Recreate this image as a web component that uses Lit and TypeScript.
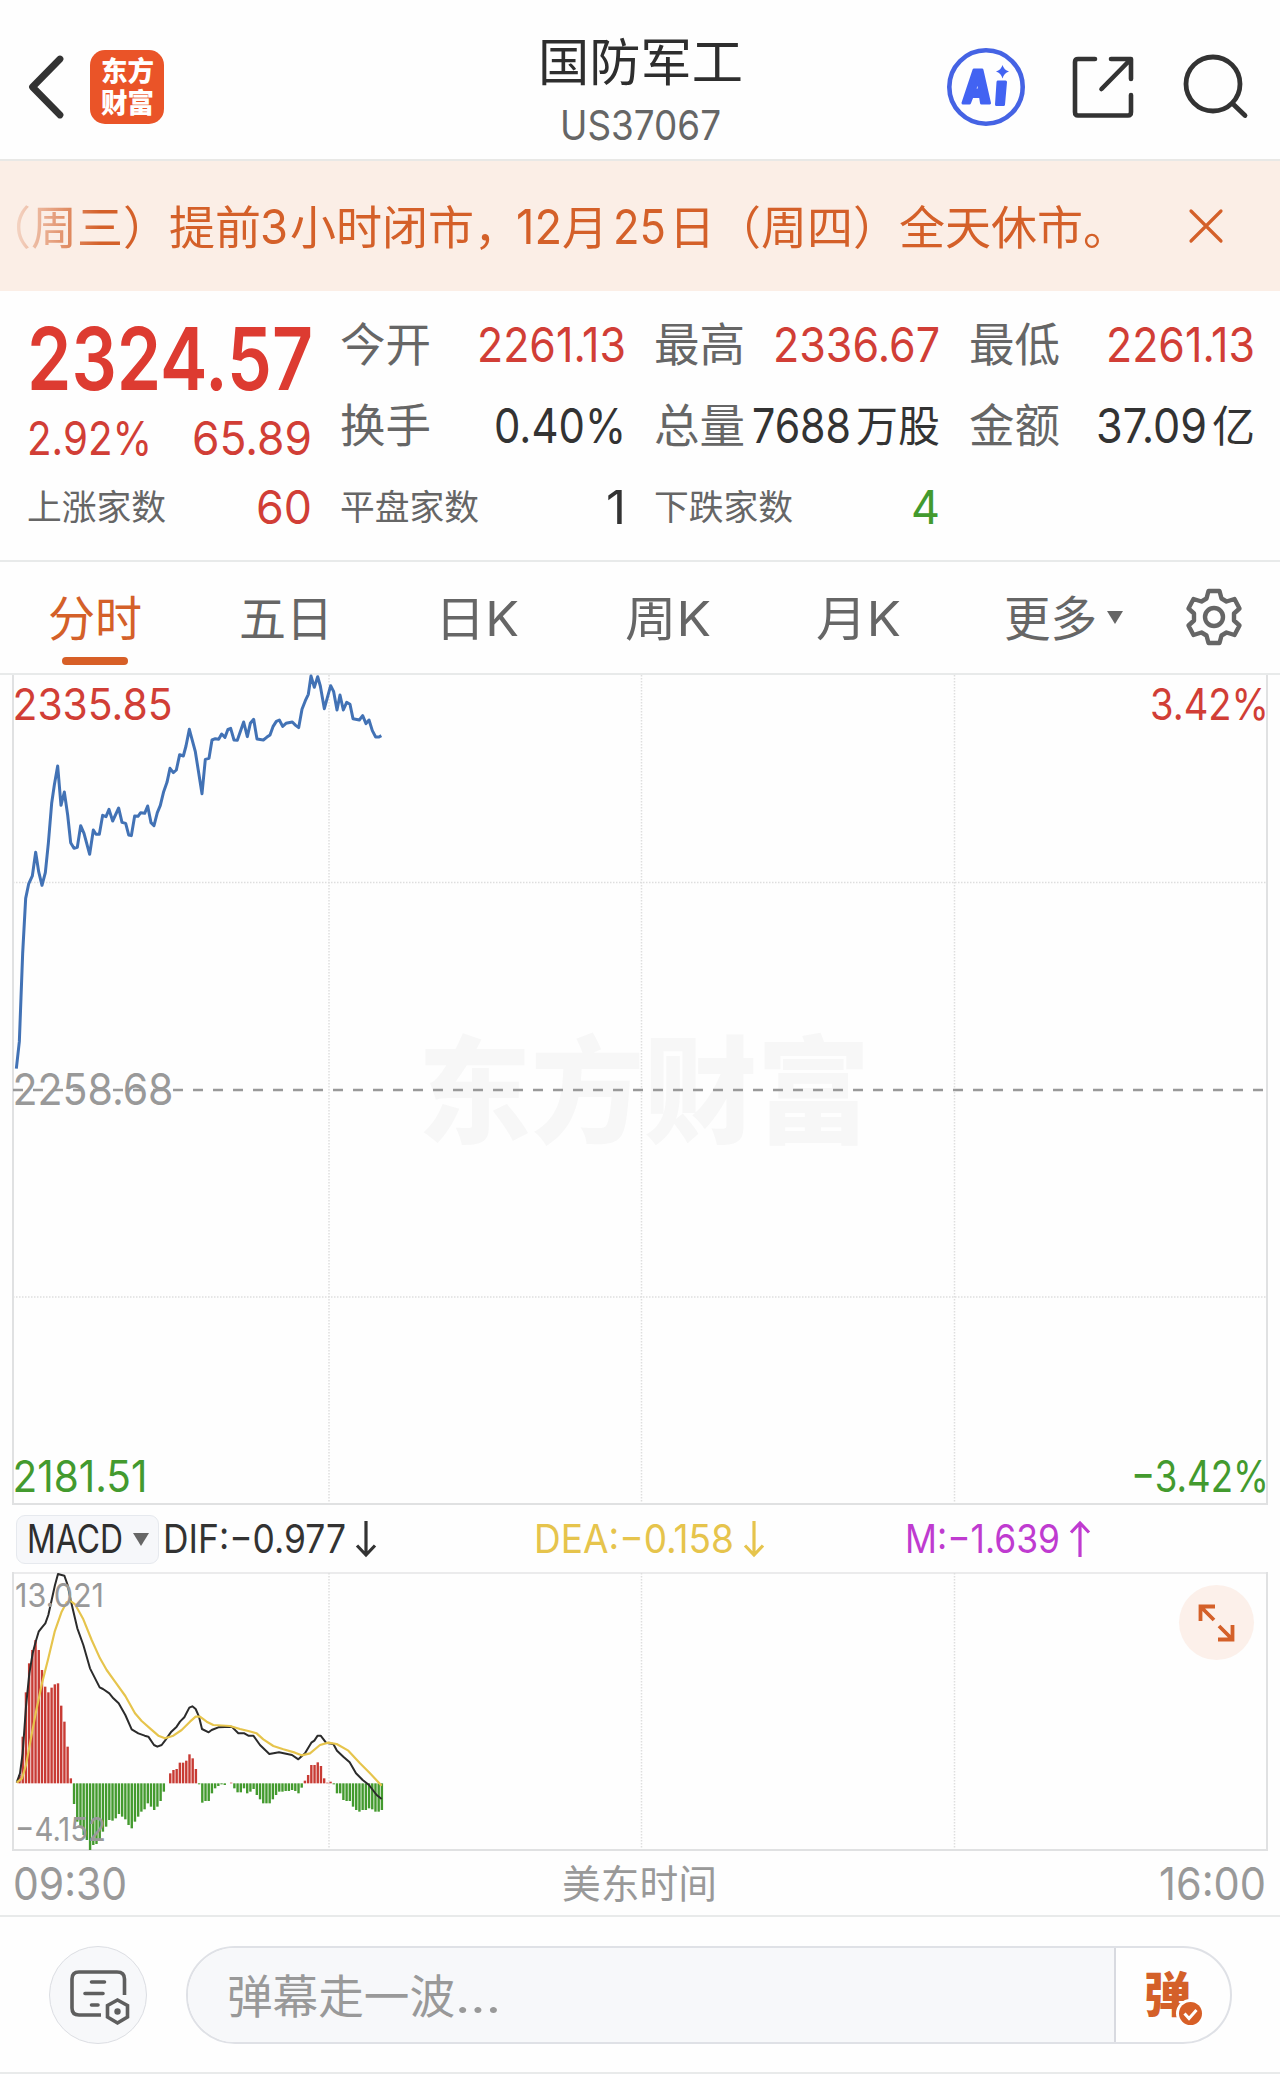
import { LitElement, html, css, svg } from "lit";
import { customElement } from "lit/decorators.js";

/** One line of text set to an exact advance width, in an em-high box. */
const fit = (text: string, width: number, size: number, cls = "") => html`
  <svg class="fit ${cls}" width=${width} height=${size} role="text">
    <text x="0" y=${size * 0.85} font-size=${size} textLength=${width} lengthAdjust="spacingAndGlyphs">${text}</text>
  </svg>`;

const label = (text: string, x: number, y: number, width: number, size: number, cls: string) => svg`
  <text class=${cls} x=${x} y=${y} font-size=${size} textLength=${width} lengthAdjust="spacingAndGlyphs">${text}</text>`;

/** Runs of the notice: text, start offset, advance width, font size. */
const NOTICE: [string, number, number, number][] = [
  ["（周三）提前", 0, 276, 46],
  ["3", 275, 28, 48],
  ["小时闭市，", 305, 230, 46],
  ["12", 531, 46, 48],
  ["月", 577, 46, 46],
  ["25", 628, 53, 48],
  ["日（周四）全天休市。", 684, 460, 46],
];

const PRICE =
  "49,1226 58,1145 68,880 77,715 86,672 97,648 107,577 116,635 126,676 136,638 145,550 155,430 163,375 173,318 183,436 193,396 203,465 212,548 222,565 232,562 242,497 252,520 269,583 280,510 288,523 298,523 308,466 318,470 327,448 338,483 356,444 366,487 377,490 386,525 394,527 404,468 414,469 422,458 434,460 443,438 453,488 462,497 472,458 481,436 491,395 501,367 510,325 520,338 529,330 539,284 550,288 558,258 568,208 586,275 606,401 616,298 627,295 636,240 646,236 656,238 665,222 675,232 684,208 692,205 702,240 712,241 731,186 742,230 751,190 761,178 771,237 790,240 800,232 810,225 819,200 829,184 838,180 848,199 858,190 877,186 887,196 896,203 906,148 916,122 925,103 933,48 943,82 953,50 961,78 973,146 992,77 1001,95 1011,150 1020,105 1030,150 1040,127 1050,133 1059,176 1078,180 1088,167 1098,191 1107,180 1117,212 1127,231 1137,231 1144,227";

const DIF =
  "50,1028 60,1000 68,940 78,800 88,700 98,640 107,605 116,575 126,562 136,550 145,525 155,480 165,435 174,402 193,407 203,435 212,480 232,565 250,615 270,685 299,742 309,747 328,760 340,775 356,790 376,825 395,868 415,880 434,887 445,890 462,915 472,920 485,915 495,902 514,875 530,860 540,845 553,832 568,803 577,799 587,807 597,830 606,867 626,877 635,870 655,862 695,860 715,880 733,880 745,887 760,887 780,915 808,942 837,937 876,945 895,958 915,940 934,908 943,902 953,887 962,887 978,908 1000,912 1011,932 1030,950 1049,967 1068,1000 1088,1020 1107,1035 1130,1065 1145,1077";

const DEA =
  "50,1028 66,1015 78,975 90,910 107,820 126,730 145,655 164,575 185,515 200,487 212,483 225,493 250,538 275,600 300,655 320,690 345,725 376,768 405,820 425,843 450,865 475,887 495,895 520,887 545,870 570,845 587,830 600,830 620,845 640,855 690,858 720,867 745,873 770,880 790,898 820,918 850,928 885,938 905,946 930,940 960,915 985,908 1010,912 1045,932 1080,970 1110,1000 1145,1037";

/** Histogram heights per minute, positive above the zero line. */
const BARS = [
  25, 140, 273, 360, 400, 430, 400, 340, 290, 273, 287, 297, 300, 233, 185, 110, 15,
  -62, -115, -130, -155, -170, -200, -185, -182, -170, -145, -130, -110, -112, -105, -92, -100, -108, -125, -135, -115,
  -100, -85, -78, -60, -70, -80, -70, -53, -25, 0,
  30, 40, 43, 62, 62, 68, 87, 75, 43, -3,
  -58, -53, -53, -30, -15, -8, -3, -5, 0, 2, -15, -27, -27, -15, -30, -25, -17, -35, -48, -60, -60, -60, -48, -35, -25,
  -25, -23, -23, -20, -23, -30, -13, 8, 25, 55, 55, 63, 52, 15, 2, 5, -3, -30, -30, -50, -53, -53, -70, -80, -85, -80,
  -80, -75, -78, -85, -85, -80,
];

@customElement("app-root")
export class AppRoot extends LitElement {
  static styles = css`
    :host {
      display: block;
      width: 1280px;
      height: 2080px;
      overflow: hidden;
      background: #fefefe;
      color: #333;
      font-family: Inter, "Noto Sans CJK SC", sans-serif;
    }
    * { box-sizing: border-box; }
    svg { display: block; flex: none; overflow: visible; }
    text { fill: currentColor; }
    .red { color: #d13e36; }
    .vivid { color: #dd3b31; }
    .green { color: #439a2e; }
    .orange { color: #d46029; }
    .gray { color: #666; }
    .light { color: #999; }
    .dark { color: #2e2e2e; }
    .gold { color: #e6c44c; }
    .purple { color: #bf3bd0; }
    .white { color: #fff; }
    .mark { color: #f7f7f7; }
    .semi { font-weight: 600; }
    .heavy { font-weight: 900; }

    .header { display: grid; grid-template-columns: 400px 1fr 400px; height: 161px; border-bottom: 2px solid #e8e8e6; }
    .left { display: flex; align-items: center; gap: 25px; padding: 15px 0 0 27px; }
    .logo { width: 74px; height: 74px; border-radius: 15px; background: #ea5428; display: flex; flex-direction: column; align-items: center; justify-content: center; gap: 5px; }
    .title { display: flex; flex-direction: column; align-items: center; padding-top: 38px; gap: 16px; }
    .actions { display: flex; align-items: center; justify-content: flex-end; gap: 47px; padding: 15px 31px 0 0; }
    .search { margin-left: 4px; }

    .notice { height: 130px; background: #fbeee6; display: flex; align-items: center; }
    .marquee { width: 1112px; height: 60px; margin-left: 8px; overflow: hidden; display: flex; align-items: center; padding-top: 3px; -webkit-mask-image: linear-gradient(to right, rgba(0,0,0,0.1) 0, #000 92px); mask-image: linear-gradient(to right, rgba(0,0,0,0.1) 0, #000 92px); }
    .marquee svg { margin-left: -23px; }
    .notice .close { margin-left: 69px; }

    .quote { height: 271px; padding: 13px 26px 0 27px; border-bottom: 2px solid #e8eaea; display: grid; grid-template-columns: 285px repeat(3, 286px); column-gap: 28.2px; }
    .col { display: flex; flex-direction: column; }
    .cell { height: 81.4px; display: flex; align-items: center; justify-content: space-between; }
    .big { height: 105px; display: flex; align-items: center; padding-top: 5px; }
    .change { height: 57.8px; display: flex; align-items: center; justify-content: space-between; padding-top: 1px; }
    .amount { display: flex; align-items: center; gap: 5px; }

    .tabs { height: 113px; border-bottom: 2px solid #e8eaea; display: grid; grid-template-columns: repeat(5, 191px) 209px 1fr; }
    .tab { display: flex; flex-direction: column; align-items: center; padding: 33px 2px 0 0; }
    .tab::after { content: ""; width: 66px; height: 8px; margin-top: 14px; border-radius: 4px; background: transparent; }
    .tab.on::after { background: #d75f27; }
    .more { display: flex; align-items: flex-start; gap: 10px; padding: 33px 0 0 49px; }
    .more .tri { margin-top: 16px; }
    .gear { padding: 25px 0 0 21px; }

    .chart { height: 831px; }
    .indicators { height: 66px; display: grid; grid-template-columns: 163px 371px 371px 1fr; align-items: center; }
    .pill { width: 143px; height: 49px; margin-left: 16px; padding: 0 9px 0 10px; background: #f6f7fa; border: 1.5px solid #e6e9ee; border-radius: 9px; display: flex; align-items: center; justify-content: space-between; }
    .ind { display: flex; align-items: center; gap: 10px; }
    .macd { height: 279px; }
    .times { height: 66px; display: flex; justify-content: space-between; align-items: center; padding: 2px 14px 0 13px; border-bottom: 2px solid #e8eaea; }
    .zone { margin-left: -7px; }

    .footer { height: 157px; border-bottom: 2px solid #e8eaea; display: flex; align-items: center; gap: 39px; padding-left: 49px; }
    .round { width: 98px; height: 98px; border-radius: 50%; border: 1.5px solid #dcdee3; background: #f7f8fa; display: flex; align-items: center; justify-content: center; }
    .input { width: 1046px; height: 98px; border-radius: 49px; border: 2px solid #dfe1e6; overflow: hidden; display: flex; }
    .field { flex: 1; background: #f7f8fa; display: flex; align-items: center; padding: 4px 0 0 39px; }
    .send { width: 116px; border-left: 2px solid #d8dae0; display: flex; align-items: center; padding-left: 28px; }
    .lines line { stroke: #e4e4e6; stroke-width: 1.5; }
    .lines .dot { stroke-dasharray: 1.5 1.5; stroke: #dedede; }
    .lines .frame { stroke: #e0e1e2; stroke-width: 2; }
  `;

  private header() {
    return html`<header class="header">
      <div class="left">
        <svg width="38" height="60" viewBox="0 0 38 60"><path d="M33 2 5.500 30 33 58" fill="none" stroke="#333" stroke-width="6.800" stroke-linecap="round" stroke-linejoin="round"/></svg>
        <div class="logo">${fit("东方", 53, 27, "white heavy")}${fit("财富", 53, 27, "white heavy")}</div>
      </div>
      <div class="title">${fit("国防军工", 205, 51, "dark")}${fit("US37067", 161, 41, "gray")}</div>
      <div class="actions">
        <svg width="78" height="78" viewBox="0 0 78 78">
          <circle cx="39" cy="39" r="36.7" fill="none" stroke="#4563e4" stroke-width="4.6"/>
          <path fill="#4263f2" stroke="#4263f2" stroke-width="3" stroke-linejoin="round" fill-rule="evenodd" d="M16 55 27 22H35L42.500 55H34.500L33.500 48.500H25L22.500 55ZM27.500 42H32.500L31 31ZM51 34H58.500L56.500 56.500H49.500Z"/>
          <path fill="#4263f2" d="M55.500 17Q57 22 62 23.500Q57 25 55.500 30.500Q54 25 49 23.500Q54 22 55.500 17Z"/>
        </svg>
        <svg width="62" height="62" viewBox="0 0 62 62" fill="none" stroke="#333" stroke-width="4.6" stroke-linecap="round" stroke-linejoin="round">
          <path d="M23 3H6Q3 3 3 6V56Q3 59.500 6 59.500H56Q59 59.500 59 56V39M39 3H59V23M58 4 29.500 33"/>
        </svg>
        <svg class="search" width="64" height="64" viewBox="0 0 64 64" fill="none" stroke="#333" stroke-width="4.8" stroke-linecap="round">
          <circle cx="28" cy="29" r="27"/><path d="M47.500 48.500 60 60.500"/>
        </svg>
      </div>
    </header>`;
  }

  private notice() {
    return html`<div class="notice">
      <div class="marquee">
        <svg class="orange" width="1145" height="46" role="text">
          <text y="39">${NOTICE.map(([text, x, width, size]) => svg`<tspan x=${x} font-size=${size} textLength=${width} lengthAdjust="spacingAndGlyphs">${text}</tspan>`)}</text>
        </svg>
      </div>
      <svg class="close" width="34" height="34" viewBox="0 0 34 34"><path d="M2 2 32 32M32 2 2 32" stroke="#d46029" stroke-width="3.200" stroke-linecap="round"/></svg>
    </div>`;
  }

  private cell(name: string, nameWidth: number, size: number, value: unknown) {
    return html`<div class="cell">${fit(name, nameWidth, size, "gray")}${value}</div>`;
  }

  private quote() {
    return html`<section class="quote">
      <div class="col">
        <div class="big">${fit("2324.57", 286, 87, "vivid semi")}</div>
        <div class="change">${fit("2.92%", 125, 47, "red")}${fit("65.89", 120, 47, "red")}</div>
        ${this.cell("上涨家数", 139, 35, fit("60", 56, 47, "red"))}
      </div>
      <div class="col">
        ${this.cell("今开", 91, 46, fit("2261.13", 149, 48, "red"))}
        ${this.cell("换手", 91, 46, fit("0.40%", 132, 48))}
        ${this.cell("平盘家数", 139, 35, fit("1", 20, 47))}
      </div>
      <div class="col">
        ${this.cell("最高", 91, 46, fit("2336.67", 167, 48, "red"))}
        ${this.cell("总量", 91, 46, html`<div class="amount">${fit("7688", 99, 48)}${fit("万股", 84, 43)}</div>`)}
        ${this.cell("下跌家数", 139, 35, fit("4", 29, 47, "green"))}
      </div>
      <div class="col">
        ${this.cell("最低", 91, 46, fit("2261.13", 149, 48, "red"))}
        ${this.cell("金额", 91, 46, html`<div class="amount">${fit("37.09", 111, 48)}${fit("亿", 43, 43)}</div>`)}
      </div>
    </section>`;
  }

  private tabs() {
    return html`<nav class="tabs">
      <div class="tab on">${fit("分时", 94, 48, "orange")}</div>
      <div class="tab">${fit("五日", 94, 48, "gray")}</div>
      <div class="tab">${fit("日K", 84, 48, "gray")}</div>
      <div class="tab">${fit("周K", 86, 48, "gray")}</div>
      <div class="tab">${fit("月K", 85, 48, "gray")}</div>
      <div class="more">${fit("更多", 93, 48, "gray")}
        <svg class="tri" width="16" height="13"><path d="M0 0H16L8 13Z" fill="#666"/></svg></div>
      <div class="gear"><svg width="58" height="60" viewBox="-29 -30 58 60" fill="none" stroke="#666" stroke-width="4.4" stroke-linejoin="round">
        <path d="M-5.500 -26H5.500L7.500 -18.500L12.500 -15.500L20.500 -18L25.500 -8.500L20 -3.500V3.500L25.500 8.500L20.500 18L12.500 15.500L7.500 18.500L5.500 26H-5.500L-7.500 18.500L-12.500 15.500L-20.500 18L-25.500 8.500L-20 3.500V-3.500L-25.500 -8.500L-20.500 -18L-12.500 -15.500L-7.500 -18.500Z"/>
        <circle r="9"/></svg></div>
    </nav>`;
  }

  private chart() {
    return html`<svg class="chart" width="1280" height="831" viewBox="0 675 1280 831">
      ${label("东方财富", 418, 1134, 452, 116, "mark heavy")}
      <g class="lines">
        <line class="dot" x1="329" x2="329" y1="675" y2="1504"/><line class="dot" x1="641.500" x2="641.500" y1="675" y2="1504"/><line class="dot" x1="954.500" x2="954.500" y1="675" y2="1504"/>
        <line class="dot" x1="13" x2="1267" y1="882.500" y2="882.500"/><line class="dot" x1="13" x2="1267" y1="1297" y2="1297"/>
        <line class="frame" x1="13" x2="13" y1="675" y2="1504"/><line class="frame" x1="1267" x2="1267" y1="675" y2="1504"/>
        <line class="frame" x1="12" x2="1268" y1="1504" y2="1504"/>
      </g>
      <path d="M13 1090H1267" stroke="#999" stroke-width="2.400" stroke-dasharray="10 10"/>
      <polyline points=${PRICE} transform="translate(0 660) scale(0.33333)" fill="none" stroke="#4272b5" stroke-width="9" stroke-linejoin="round"/>
      ${label("2335.85", 12.5, 719.5, 160, 44, "red")}
      ${label("3.42%", 1150, 719.5, 119, 44, "red")}
      ${label("2258.68", 12.5, 1105, 161, 44, "light")}
      ${label("2181.51", 12.5, 1492, 135, 44, "green")}
      ${label("−3.42%", 1131, 1492, 138, 44, "green")}
    </svg>`;
  }

  private arrow(color: string, up = false) {
    return html`<svg width="20" height="38" viewBox="0 0 20 38" fill="none" stroke=${color} stroke-width="3.200"><path d=${up ? "M10 37V3M1 12.500 10 3 19 12.500" : "M10 1V35M1 25.500 10 35 19 25.500"}/></svg>`;
  }

  private macd() {
    return html`<section class="indicators">
        <div class="pill">${fit("MACD", 96, 39, "dark")}<svg width="16" height="13"><path d="M0 0H16L8 13Z" fill="#666"/></svg></div>
        <div class="ind">${fit("DIF:−0.977", 183, 39)}${this.arrow("#333")}</div>
        <div class="ind gold">${fit("DEA:−0.158", 200, 39)}${this.arrow("#e6c44c")}</div>
        <div class="ind purple">${fit("M:−1.639", 155, 39)}${this.arrow("#bf3bd0", true)}</div>
      </section>
      <svg class="macd" width="1280" height="279" viewBox="0 1572 1280 279">
        <g class="lines">
          <line x1="12" x2="1268" y1="1573" y2="1573"/>
          <line class="dot" x1="329" x2="329" y1="1573" y2="1850"/><line class="dot" x1="641.500" x2="641.500" y1="1573" y2="1850"/><line class="dot" x1="954.500" x2="954.500" y1="1573" y2="1850"/>
          <line class="frame" x1="13" x2="13" y1="1572" y2="1850"/><line class="frame" x1="1267" x2="1267" y1="1572" y2="1850"/>
          <line class="frame" x1="12" x2="1268" y1="1850" y2="1850"/>
        </g>
        <g transform="translate(0 1440) scale(0.33333)" fill="none">
          ${BARS.map((v, i) => svg`<rect x=${55 + i * 9.62} y=${v > 0 ? 1030 - v : 1030} width="7.2" height=${Math.abs(v)} fill=${v > 0 ? "#c83b34" : "#439a2e"}/>`)}
          <polyline points=${DIF} stroke="#2b2b2b" stroke-width="6" stroke-linejoin="round"/>
          <polyline points=${DEA} stroke="#e6c44c" stroke-width="6.500" stroke-linejoin="round"/>
        </g>
        ${label("13.021", 15, 1607, 89, 33, "light")}
        ${label("−4.152", 15, 1841, 91, 33, "light")}
        <circle cx="1216.500" cy="1622.500" r="37.500" fill="#fcf0ea"/>
        <path d="M1215 1606.500H1200.500V1621M1201 1607 1214 1620M1218 1639.500H1232.500V1625M1232 1639 1219 1626" fill="none" stroke="#d46029" stroke-width="3.800"/>
      </svg>
      <div class="times light">${fit("09:30", 114, 45)}<div class="zone">${fit("美东时间", 155, 39)}</div>${fit("16:00", 107, 45)}</div>`;
  }

  private footer() {
    return html`<footer class="footer">
      <div class="round">
        <svg width="60" height="60" viewBox="68 1965 60 60" fill="none" stroke="#5e5e5e" stroke-width="3.600">
          <path d="M101 2015H79Q72 2015 72 2008V1979Q72 1972 79 1972H117Q124.500 1972 124.500 1979V1995"/>
          <path stroke-linecap="round" d="M91.500 1982H104.500M85 1993.500H103M91.500 2005H98"/>
          <path d="M117.500 2000 127.500 2005.500V2017L117.500 2023 107.500 2017V2005.500Z"/><circle cx="117.500" cy="2011.500" r="3.200" fill="#5e5e5e" stroke="none"/>
        </svg>
      </div>
      <div class="input">
        <div class="field light">${fit("弹幕走一波", 228, 46)}${fit("...", 46, 46)}</div>
        <div class="send">
          <svg class="orange heavy" width="60" height="52" viewBox="0 0 60 52">
            <text x="0" y="43" font-size="48" textLength="47" lengthAdjust="spacingAndGlyphs">弹</text>
            <circle cx="46.500" cy="44.500" r="14.500" fill="#fff"/><circle cx="46.500" cy="44.500" r="11.500" fill="#d75f27"/>
            <path d="M40.500 44.500 45 49.500 52.500 41" fill="none" stroke="#fff" stroke-width="3"/>
          </svg>
        </div>
      </div>
    </footer>`;
  }

  render() {
    return html`${this.header()}${this.notice()}${this.quote()}${this.tabs()}${this.chart()}${this.macd()}${this.footer()}`;
  }
}
